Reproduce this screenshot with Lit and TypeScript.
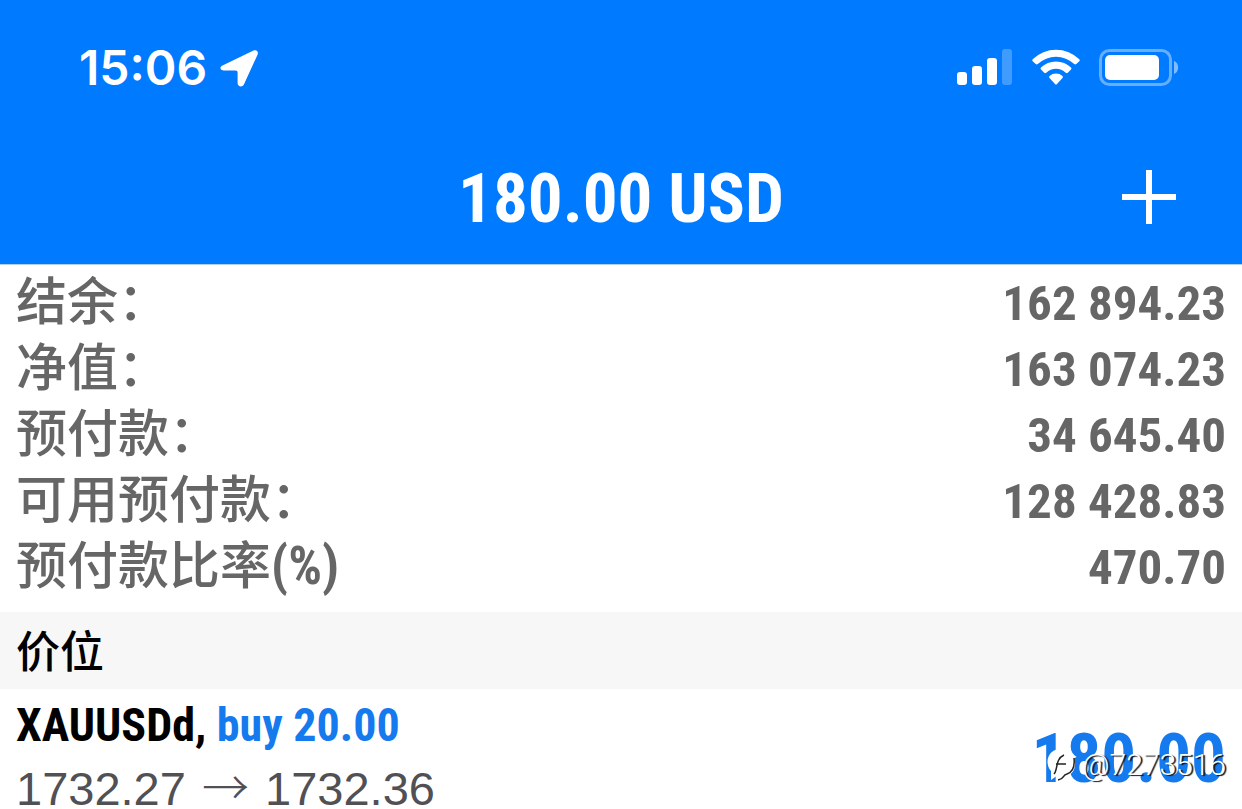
import { LitElement, html, css } from "lit";
import { customElement, property, state } from "lit/decorators.js";

interface SummaryRow {
  label: string;
  unit?: string;
  value: string;
}

interface Position {
  symbol: string;
  side: string;
  volume: string;
  open: string;
  current: string;
  profit: string;
}

@customElement("status-bar")
class StatusBar extends LitElement {
  @property() time = "";

  static styles = css`
    :host {
      display: flex;
      align-items: center;
      justify-content: space-between;
      padding: 40px 63px 0 79px;
      color: #fff;
    }
    .clock,
    .indicators {
      display: flex;
      align-items: center;
    }
    .clock {
      gap: 13px;
      font: 600 48px/56px Inter, "Liberation Sans", sans-serif;
    }
    .indicators {
      gap: 19px;
    }
    svg {
      display: block;
      fill: currentColor;
    }
  `;

  render() {
    return html`
      <div class="clock">
        <span>${this.time}</span>
        <svg width="38" height="38" viewBox="0 0 38 38" aria-hidden="true">
          <path d="M2.500 16.500 33 1.700C36.500 .2 39 2.600 37.400 6L24 35.300C22.300 38.800 17.600 37.800 17.600 34V24C17.600 22.300 17 21.600 15.300 21.600H4C0 21.600-.8 18 2.500 16.500Z" />
        </svg>
      </div>
      <div class="indicators">
        <svg width="56" height="38" viewBox="0 0 56 38" aria-hidden="true">
          <rect x="0" y="23" width="10" height="13" rx="3" />
          <rect x="15" y="17" width="10" height="19" rx="3" />
          <rect x="30" y="9" width="10" height="27" rx="3" />
          <rect x="45" y="0" width="10" height="36" rx="3" opacity=".25" />
        </svg>
        <svg width="48" height="38" viewBox="0 0 48 38" aria-hidden="true">
          <path d="M.7 10.2A33.5 33.5 0 0 1 47.3 10.2Q48.2 11.2 47.3 12.2L44.3 15.1Q43.2 16 42.2 15.1A26.3 26.3 0 0 0 5.8 15.1Q4.8 16 3.7 15.1L.7 12.2Q-.2 11.2.7 10.2Z" />
          <path d="M9 18.6A21.5 21.5 0 0 1 39 18.6Q40 19.6 39 20.6L35.8 23.7Q34.7 24.6 33.7 23.7A14.2 14.2 0 0 0 14.3 23.7Q13.3 24.6 12.2 23.7L9 20.6Q8 19.6 9 18.6Z" />
          <path d="M17.5 27A9.8 9.8 0 0 1 30.5 27Q31.4 28 30.5 29L25 35Q24 36 23 35L17.5 29Q16.6 28 17.5 27Z" />
        </svg>
        <svg width="80" height="38" viewBox="0 0 80 38" aria-hidden="true">
          <rect x="1.5" y="1.5" width="70" height="34" rx="9" fill="none" stroke="#fff" stroke-width="3" opacity=".4" />
          <rect x="6" y="6" width="54" height="25" rx="5" />
          <path d="M75 12C80.500 14 80.500 23 75 25Z" opacity=".5" />
        </svg>
      </div>
    `;
  }
}

@customElement("post-signature")
class PostSignature extends LitElement {
  @property() author = "";

  static styles = css`
    :host {
      display: flex;
      align-items: center;
      gap: 4px;
      color: #fff;
      font: 300 30px/40px Roboto, sans-serif;
      text-shadow: 2px 1px 1px #111;
    }
    svg {
      display: block;
    }
  `;

  render() {
    return html`
      <svg width="32" height="34" viewBox="0 0 32 34" aria-hidden="true">
        <path d="M13 1C2 2-2 15 5 23L5 32 12 27C22 31 30 25 29 14C28 5 21 0 13 1Z" fill="#fff" />
        <path d="M8 26C12 22 9 11 18 7M10 16H20M28 10C29 19 27 24 21 26 16 27 19 31 12 32" fill="none" stroke="#222" stroke-width="1.500" />
      </svg>
      <span>@${this.author}</span>
    `;
  }
}

@customElement("app-root")
class AppRoot extends LitElement {
  @state() private rows: SummaryRow[] = [
    { label: "结余\uff1a", value: "162 894.23" },
    { label: "净值\uff1a", value: "163 074.23" },
    { label: "预付款\uff1a", value: "34 645.40" },
    { label: "可用预付款\uff1a", value: "128 428.83" },
    { label: "预付款比率", unit: "(%)", value: "470.70" },
  ];

  @state() private positions: Position[] = [
    { symbol: "XAUUSDd,", side: "buy", volume: "20.00", open: "1732.27", current: "1732.36", profit: "180.00" },
  ];

  static styles = css`
    :host {
      display: block;
      min-height: 100vh;
      background: #fff;
      color: #000;
      font-family: "Roboto Condensed", "Open Sans Condensed", "Liberation Sans", sans-serif;
    }
    .top {
      background: #007aff;
      border-bottom: 1px solid #b2cfee;
    }
    .title-bar {
      display: grid;
      grid-template-columns: 1fr auto 1fr;
      align-items: center;
      padding: 59px 66px 25px;
      color: #fff;
    }
    h1 {
      grid-column: 2;
      margin: 0;
      padding-top: 4px;
      font-size: 69px;
      line-height: 80px;
      font-weight: 700;
    }
    .add {
      justify-self: end;
      padding: 0;
      border: 0;
      background: none;
      color: inherit;
    }
    .add svg {
      display: block;
    }
    .summary {
      margin: 0;
      padding: 6px 16px 11px;
      color: #666;
    }
    .row,
    dt {
      display: flex;
      align-items: baseline;
    }
    .row {
      justify-content: space-between;
      font-size: 49px;
      line-height: 66px;
      font-weight: 700;
    }
    dd {
      margin: 0;
    }
    .label {
      font-family: "Noto Sans CJK SC", sans-serif;
      font-size: 51px;
      line-height: 50px;
      font-weight: 500;
    }
    .unit {
      font-size: 53px;
      line-height: 50px;
    }
    h2 {
      margin: 0;
      padding: 0 16px 3px;
      background: #f7f7f7;
      font: 500 44px/74px "Noto Sans CJK SC", sans-serif;
    }
    .position {
      display: flex;
      justify-content: space-between;
      align-items: center;
      padding: 4px 16px 0;
    }
    .deal {
      font-size: 46px;
      line-height: 64px;
      font-weight: 700;
    }
    .side,
    .profit {
      color: #147aee;
    }
    .prices {
      margin-top: 4px;
      color: #505055;
      font-family: "Liberation Sans", sans-serif;
      font-size: 47px;
      line-height: 48px;
    }
    .arrow {
      margin: 0 3px;
      font-family: "Noto Sans CJK SC", sans-serif;
      font-weight: 300;
      line-height: 1;
    }
    .result {
      position: relative;
      padding-top: 12px;
      font-size: 69px;
      line-height: 80px;
      font-weight: 700;
    }
    .signature {
      position: absolute;
      right: 0;
      bottom: 14px;
    }
  `;

  render() {
    return html`
      <header class="top">
        <status-bar time="15:06"></status-bar>
        <div class="title-bar">
          <h1>180.00 USD</h1>
          <button class="add" aria-label="Add">
            <svg width="54" height="54" viewBox="0 0 54 54" aria-hidden="true">
              <path d="M27 0V54M0 27H54" stroke="currentColor" stroke-width="6" />
            </svg>
          </button>
        </div>
      </header>
      <main>
        <dl class="summary">
          ${this.rows.map(
            (r) => html`<div class="row">
              <dt><span class="label">${r.label}</span>${r.unit ? html`<span class="unit">${r.unit}</span>` : ""}</dt>
              <dd>${r.value}</dd>
            </div>`
          )}
        </dl>
        <h2>价位</h2>
        ${this.positions.map(
          (p) => html`<article class="position">
            <div>
              <div class="deal">${p.symbol} <span class="side">${p.side} ${p.volume}</span></div>
              <div class="prices">${p.open} <span class="arrow">→</span> ${p.current}</div>
            </div>
            <div class="result">
              <span class="profit">${p.profit}</span>
              <post-signature class="signature" author="7273516"></post-signature>
            </div>
          </article>`
        )}
      </main>
    `;
  }
}
